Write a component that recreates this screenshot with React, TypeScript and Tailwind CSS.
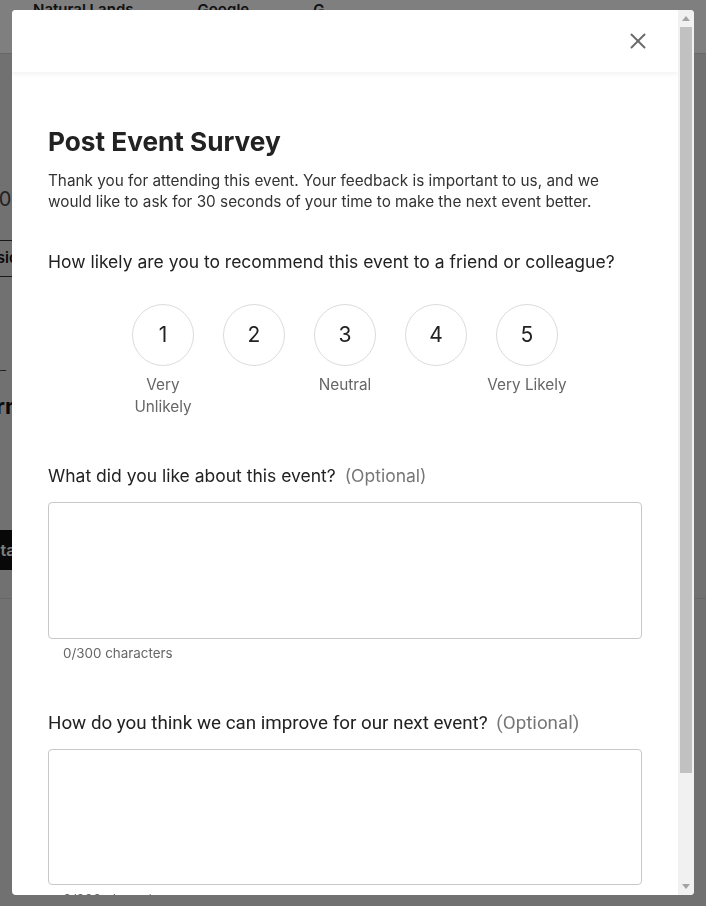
import React, { useState } from 'react';

const labels: Record<number, string> = {
  1: 'Very Unlikely',
  3: 'Neutral',
  5: 'Very Likely',
};

const CloseIcon = () => (
  <svg width="16" height="16" viewBox="0 0 16 16" fill="none" stroke="#6b6b6b" strokeWidth="2" strokeLinecap="round">
    <line x1="1.5" y1="1.5" x2="14.5" y2="14.5" />
    <line x1="14.5" y1="1.5" x2="1.5" y2="14.5" />
  </svg>
);

const Arrow = ({ down }: { down?: boolean }) => (
  <div className="h-[17px] flex items-center justify-center">
    <svg width="8" height="5" viewBox="0 0 8 5" fill="#a3a3a3">
      {down ? <polygon points="0,0 8,0 4,5" /> : <polygon points="4,0 8,5 0,5" />}
    </svg>
  </div>
);

// page that sits behind the dimmed overlay
const Background = () => (
  <div className="min-h-screen bg-[#e2e2e2] font-['Inter',sans-serif]">
    <div className="h-[54px] bg-white border-b border-[#cfcfcf] flex items-start gap-16 pl-[33px] text-[15px] leading-[20px] font-semibold text-[#222]">
      <span>Natural Lands</span>
      <span>Google</span>
      <span>G</span>
    </div>
    <div className="pt-[130px] flex flex-col items-start">
      <span className="-ml-[26px] text-[20px] text-[#444]">2008</span>
      <div className="-ml-[30px] mt-[26px] border-y border-[#333] py-[6px] pr-4 text-[15px] font-semibold text-[#111]">Sessions</div>
      <span className="mt-[84px] text-[12px] text-[#444]">–</span>
      <span className="-ml-[30px] mt-[11px] text-[22px] font-bold text-[#111]">Form</span>
      <div className="-ml-[30px] mt-[107px] bg-[#111] text-white font-semibold h-[40px] flex items-center pl-[20px] pr-4">Start</div>
    </div>
    <div className="mt-[28px] border-t border-[#cfcfcf]" />
  </div>
);

const Counter = () => (
  <div className="mt-[5px] pl-[15px] text-[13.4px] leading-[18px] text-[#666]">0/300 characters</div>
);

export default function App() {
  const [score, setScore] = useState<number | null>(null);
  const [liked, setLiked] = useState('');
  const [improve, setImprove] = useState('');

  return (
    <div className="relative">
      <Background />
      <div className="fixed inset-0 bg-black/50" />
      <div className="fixed left-[12px] top-[10px] w-[682px] h-[885px] rounded-[4px] bg-white flex overflow-hidden font-['Inter',sans-serif]">
        <div className="flex-1 overflow-y-auto [scrollbar-width:none]">
          <div className="sticky top-0 z-10 h-[62px] bg-white shadow-[0_2px_5px_rgba(0,0,0,0.06)] flex items-center justify-end pr-[28px]">
            <button className="p-1">
              <CloseIcon />
            </button>
          </div>

          <div className="px-9 pt-[54px] pb-[60px]">
            <h2 className="text-[26.2px] leading-[32px] font-bold text-[#222]">Post Event Survey</h2>
            <p className="mt-[12px] text-[15.3px] leading-[21px] text-[#333]">
              Thank you for attending this event. Your feedback is important to us, and we would like to ask for 30 seconds of your time to make the next event better.
            </p>

            <p className="mt-[38px] text-[17.5px] leading-[24px] text-[#222]">
              How likely are you to recommend this event to a friend or colleague?
            </p>
            <div className="mt-[30px] flex justify-center">
              {[1, 2, 3, 4, 5].map(n => (
                <div key={n} className="w-[91px] flex flex-col items-center">
                  <button
                    onClick={() => setScore(n)}
                    className={`w-[62px] h-[62px] rounded-full border flex items-center justify-center text-[21px] text-[#222] ${
                      score === n ? 'border-[#222] bg-[#f4f4f4]' : 'border-[#dcdcdc] bg-white'
                    }`}
                  >
                    {n}
                  </button>
                  <span className="mt-[8px] w-[85px] text-center text-[15.3px] leading-[22px] text-[#666]">
                    {labels[n] ?? ''}
                  </span>
                </div>
              ))}
            </div>

            <p className="mt-[46px] text-[17.5px] leading-[24px] text-[#222]">
              What did you like about this event? <span className="ml-1 text-[#777]">(Optional)</span>
            </p>
            <textarea
              value={liked}
              maxLength={300}
              onChange={e => setLiked(e.target.value)}
              className="mt-[14px] block w-full h-[137px] rounded-[4px] border border-[#c8c8c8] resize-none p-3 outline-none"
            />
            <Counter />

            <p className="mt-[49px] text-[18.8px] leading-[24px] text-[#222] font-['Roboto',sans-serif]">
              How do you think we can improve for our next event? <span className="ml-1 text-[#777]">(Optional)</span>
            </p>
            <textarea
              value={improve}
              maxLength={300}
              onChange={e => setImprove(e.target.value)}
              className="mt-[14px] block w-full h-[136px] rounded-[4px] border border-[#c8c8c8] resize-none p-3 outline-none"
            />
            <Counter />

            <button className="mt-[30px] h-[44px] px-8 rounded-[4px] bg-[#111] text-white font-semibold">Submit</button>
          </div>
        </div>

        {/* scrollbar as drawn in the reference */}
        <div className="w-[16px] shrink-0 bg-[#f1f1f1] flex flex-col">
          <Arrow />
          <div className="h-[746px] mx-[2px] bg-[#c1c1c1]" />
          <div className="flex-1" />
          <Arrow down />
        </div>
      </div>
    </div>
  );
}
